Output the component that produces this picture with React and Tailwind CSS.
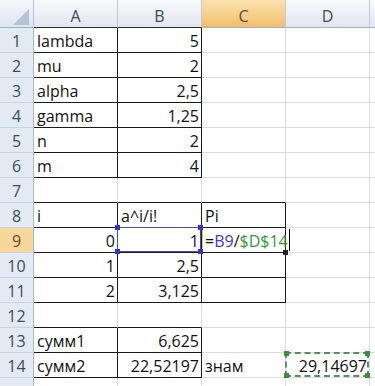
import React from 'react';

const cols = ['A', 'B', 'C', 'D', ''];

const data = [
  ['lambda', '5'],
  ['mu', '2'],
  ['alpha', '2,5'],
  ['gamma', '1,25'],
  ['n', '2'],
  ['m', '4'],
  [],
  ['i', 'a^i/i!', 'Pi'],
  ['0', '1', 'FORMULA'],
  ['1', '2,5'],
  ['2', '3,125'],
  [],
  ['сумм1', '6,625'],
  ['сумм2', '22,52197', 'знам', '29,14697'],
  [],
];

// black bordered blocks: A1:B6, A8:C11, A13:B14
const bordered = (r, c) =>
  (r >= 1 && r <= 6 && c <= 1) ||
  (r >= 8 && r <= 11 && c <= 2) ||
  (r >= 13 && r <= 14 && c <= 1);

const isNumber = (v) => /^[\d,]+$/.test(v);

const Corner = ({ className }) => (
  <span className={`absolute w-[5px] h-[5px] ${className}`} />
);

const Cell = ({ r, c, value }) => {
  const black = bordered(r, c);
  const right = black || bordered(r, c + 1);
  const bottom = black || bordered(r + 1, c);
  const num = value && isNumber(value);

  return (
    <div
      className={`relative flex items-end border-r border-b pb-[1px] leading-[20px] whitespace-nowrap ${
        right ? 'border-r-[#1a1a1a]' : 'border-r-[#d9dce1]'
      } ${bottom ? 'border-b-[#1a1a1a]' : 'border-b-[#d9dce1]'} ${
        num ? 'justify-end pr-[2px]' : 'justify-start pl-[3px]'
      }`}
    >
      {value === 'FORMULA' ? (
        <>
          <span className="absolute left-0 top-0 bottom-0 w-px bg-[#dcd34a]" />
          <span className="relative z-20 flex items-end">
            <span>=</span>
            <span className="text-[#3b3bcf]">B9</span>
            <span>/</span>
            <span className="text-[#2f9a3a]">$D$14</span>
            <span className="inline-block w-px h-[22px] bg-black ml-px" />
          </span>
          <Corner className="-bottom-[3px] -right-[3px] bg-[#222] z-20" />
        </>
      ) : (
        value
      )}
      {r === 9 && c === 1 && (
        <span className="absolute -top-px -left-px right-0 bottom-0 border border-[#4646cf] z-10">
          <Corner className="-top-[3px] -left-[3px] bg-[#3434c8]" />
          <Corner className="-bottom-[3px] -left-[3px] bg-[#3434c8]" />
          <Corner className="-top-[3px] -right-[3px] bg-[#3434c8]" />
          <Corner className="-bottom-[3px] -right-[3px] bg-[#3434c8]" />
        </span>
      )}
      {r === 14 && c === 3 && (
        <span className="absolute -top-px -left-px right-0 bottom-0 border-2 border-dashed border-[#5a8e5a] z-10">
          <Corner className="-top-[3px] -left-[3px] bg-[#3f8a3f]" />
          <Corner className="-bottom-[3px] -left-[3px] bg-[#3f8a3f]" />
          <Corner className="-top-[3px] -right-[3px] bg-[#3f8a3f]" />
          <Corner className="-bottom-[3px] -right-[3px] bg-[#3f8a3f]" />
        </span>
      )}
    </div>
  );
};

export default function App() {
  return (
    <div
      className="w-[375px] h-[386px] overflow-hidden bg-white text-[16px] text-[#111]"
      style={{ fontFamily: '"Open Sans", "Noto Sans", sans-serif' }}
    >
      <div className="grid grid-cols-[34px_84px_84px_84px_84px_30px] grid-rows-[28px_repeat(15,25px)]">
        {/* corner */}
        <div className="relative border-r border-b border-r-[#b7c3d3] border-b-[#9eb0c6] bg-gradient-to-b from-[#f4f6fa] to-[#dfe5ee]">
          <svg className="absolute left-0 top-0" width="34" height="28" viewBox="0 0 34 28">
            <polygon points="13,25 29,25 29,9" fill="#b5c2d6" />
          </svg>
        </div>
        {cols.map((col, i) => (
          <div
            key={col + i}
            className={`flex items-end justify-center pb-[1px] leading-[20px] border-r border-b border-r-[#c3cad5] ${
              i <= 1 ? 'border-b-[#2a2a2a]' : 'border-b-[#9eb0c6]'
            } ${
              col === 'C'
                ? 'bg-gradient-to-b from-[#fbe3b0] to-[#f2bd6a] text-[#5b4a33]'
                : 'bg-gradient-to-b from-[#f8f9fc] to-[#e1e6ee] text-[#3d4a5c]'
            }`}
          >
            {col}
          </div>
        ))}
        {data.map((row, ri) => {
          const r = ri + 1;
          return (
            <React.Fragment key={r}>
              <div
                className={`flex items-end justify-center pb-[1px] leading-[20px] border-r border-b border-r-[#a9b9cd] border-b-[#c9d4e2] ${
                  r === 9 ? 'bg-[#f8d79a] text-[#5b4a33]' : 'bg-[#e3eaf4] text-[#3d4a5c]'
                }`}
              >
                {r <= 14 ? r : ''}
              </div>
              {cols.map((_, c) => (
                <Cell key={c} r={r} c={c} value={row[c]} />
              ))}
            </React.Fragment>
          );
        })}
      </div>
    </div>
  );
}
